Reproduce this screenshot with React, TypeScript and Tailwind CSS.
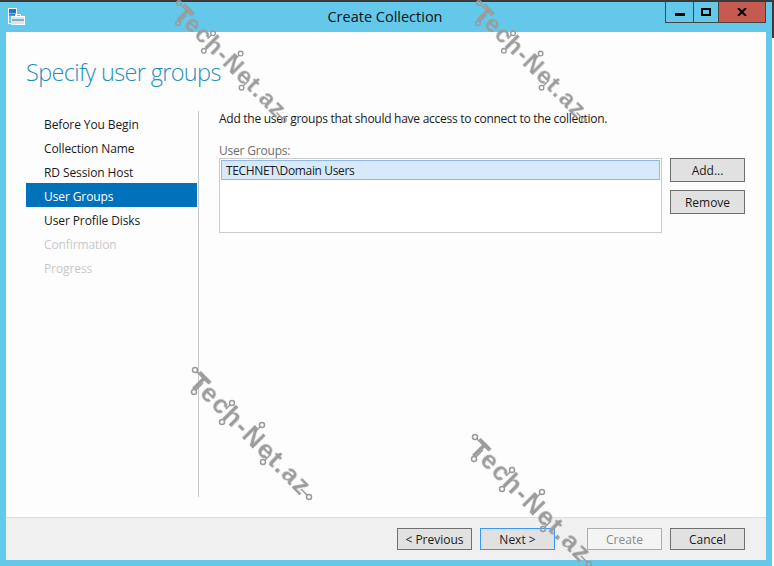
const steps = [
  { label: 'Before You Begin', state: 'done' },
  { label: 'Collection Name', state: 'done' },
  { label: 'RD Session Host', state: 'done' },
  { label: 'User Groups', state: 'active' },
  { label: 'User Profile Disks', state: 'done' },
  { label: 'Confirmation', state: 'off' },
  { label: 'Progress', state: 'off' },
];

// diagonal watermark, origin is the first circuit node on the T
const Watermark = ({ className }: { className: string }) => (
  <div className={`absolute w-0 h-0 pointer-events-none origin-top-left ${className}`}>
    <span className="absolute left-[-24px] top-[53px] w-[158px] text-center rotate-45 font-['Liberation_Sans',sans-serif] font-bold text-[26px] leading-[20px] tracking-[1.5px] text-[#9c9c9c] blur-[0.4px] whitespace-nowrap">
      Tech-Net.az
    </span>
    <svg className="absolute left-[-6px] top-[-6px] overflow-visible" width="130" height="140" fill="none" stroke="#9a9a9a" strokeWidth="1.5">
      <g transform="translate(6 6)">
        <circle cx="0" cy="0" r="2.5" />
        <path d="M2 2 L14 14" />
        <circle cx="-1" cy="22" r="2.5" />
        <path d="M1 20 L8 13" />
        <circle cx="37" cy="33" r="2.5" />
        <path d="M35 35 L31 39" />
        <circle cx="27" cy="52" r="2.5" />
        <path d="M29 50 L35 44" />
        <circle cx="67" cy="55" r="2.5" />
        <path d="M65 57 L60 62" />
        <circle cx="68" cy="92" r="2.5" />
        <path d="M70 90 L76 84" />
        <circle cx="114" cy="127" r="2.5" />
        <path d="M112 125 L106 119" />
      </g>
    </svg>
  </div>
);

const Btn = ({ children, className = '' }: { children: React.ReactNode; className?: string }) => (
  <div className={`w-[75px] pt-[1px] flex items-center justify-center border ${className}`}>
    {children}
  </div>
);

const normal = 'bg-[#e1e1e1] border-[#707070] text-[#1a1a1a]';

export default function App() {
  return (
    <div className="relative w-[774px] h-[566px] overflow-hidden bg-[#63c8ea] font-['Open_Sans',sans-serif] text-[12px] text-[#1a1a1a] flex flex-col">
      <div className="h-[2px] bg-[#3a3a3a]" />

      {/* Title bar */}
      <div className="h-[30px] flex pl-[8px] pr-[8px]">
        <svg width="17" height="17" viewBox="0 0 17 17" className="mt-[6px]" fill="none">
          <rect x="0.5" y="0.5" width="8" height="15" fill="#63c8ea" stroke="#fff" />
          <rect x="1" y="1" width="7" height="4" fill="#1e78d0" />
          <rect x="1" y="6" width="7" height="1.5" fill="#1e78d0" />
          <rect x="3.5" y="8.5" width="13" height="8" fill="#cfeaf5" stroke="#fff" />
          <path d="M7.5 8V6.5h5V8" stroke="#fff" />
          <path d="M4 12h12" stroke="#4a6f86" />
        </svg>
        <div className="flex-1 text-center text-[14.5px] leading-[29px] text-[#111] pl-[80px]">Create Collection</div>
        <div className="flex h-[21px] border border-t-0 border-[#444] ml-auto">
          <div className="w-[28px] border-r border-[#444] flex items-center justify-center">
            <div className="w-[10px] h-[3px] bg-black mt-[4px]" />
          </div>
          <div className="w-[25px] border-r border-[#444] flex items-center justify-center">
            <div className="w-[10px] h-[8px] border-2 border-black" />
          </div>
          <div className="w-[46px] bg-[#c75a50] flex items-center justify-center">
            <svg width="10" height="8" viewBox="0 0 10 8" stroke="#000" strokeWidth="2">
              <path d="M1 0l8 8M9 0l-8 8" />
            </svg>
          </div>
        </div>
      </div>

      {/* Client area */}
      <div className="ml-[6px] mr-[8px] h-[528px] bg-white flex flex-col">
        <div className="flex-1 flex flex-col bg-[#fdfdfd]">
          <h1 className="pl-[20px] pt-[23px] h-[79px] font-light text-[23.5px] leading-[34px] tracking-[-0.65px] text-[#1d8fbf]">
            Specify user groups
          </h1>
          <div className="flex flex-1">
            <div className="pl-[20px] w-[193px] h-[386px] border-r border-[#c8c8c8] flex flex-col">
              {steps.map((s) => (
                <div
                  key={s.label}
                  className={`h-[24px] w-[171px] pl-[18px] pt-[1px] leading-[26px] tracking-[-0.1px] ${
                    s.state === 'active' ? 'bg-[#0072bc] text-white' : s.state === 'off' ? 'text-[#c8c8c8]' : ''
                  }`}
                >
                  {s.label}
                </div>
              ))}
            </div>
            <div className="flex-1 pl-[20px] pr-[20px]">
              <p className="leading-[16px] tracking-[-0.27px] whitespace-nowrap">Add the user groups that should have access to connect to the collection.</p>
              <p className="mt-[15px] pt-[1px] h-[16px] leading-[16px] tracking-[-0.2px] text-[#6d6d6d]">User Groups:</p>
              <div className="flex gap-[8px]">
                <div className="w-[443px] h-[75px] border border-[#cbcbcb] bg-white p-[1px]">
                  <div className="h-[20px] border border-[#8fb8e8] bg-[#d9e9fc] pl-[4px] leading-[20px] tracking-[-0.35px]">TECHNET\Domain Users</div>
                </div>
                <div className="flex flex-col gap-[8px]">
                  <Btn className={`h-[24px] ${normal}`}>Add...</Btn>
                  <Btn className={`h-[24px] ${normal}`}>Remove</Btn>
                </div>
              </div>
            </div>
          </div>
        </div>

        {/* Footer */}
        <div className="h-[43px] border-t border-[#dcdcdc] bg-[#f0f0f0] flex pt-[10px] pl-[391px]">
          <Btn className={`h-[22px] ${normal}`}>&lt; Previous</Btn>
          <Btn className="h-[22px] ml-[8px] bg-[#e1e1e1] border-[#3399ff] text-[#1a1a1a]">Next &gt;</Btn>
          <Btn className="h-[22px] ml-[32px] bg-[#f4f4f4] border-[#adadad] text-[#8a8a8a]">Create</Btn>
          <Btn className={`h-[22px] ml-[8px] ${normal}`}>Cancel</Btn>
        </div>
      </div>

      <div className="absolute right-0 top-0 w-[2px] h-[38px] bg-[#3a3a3a]" />
      <div className="absolute right-0 top-[38px] w-[2px] h-[528px] bg-white" />

      <Watermark className="left-[179px] top-[3px] scale-[0.92]" />
      <Watermark className="left-[479px] top-[3px] scale-[0.92]" />
      <Watermark className="left-[195px] top-[370px]" />
      <Watermark className="left-[475px] top-[437px]" />
    </div>
  );
}
